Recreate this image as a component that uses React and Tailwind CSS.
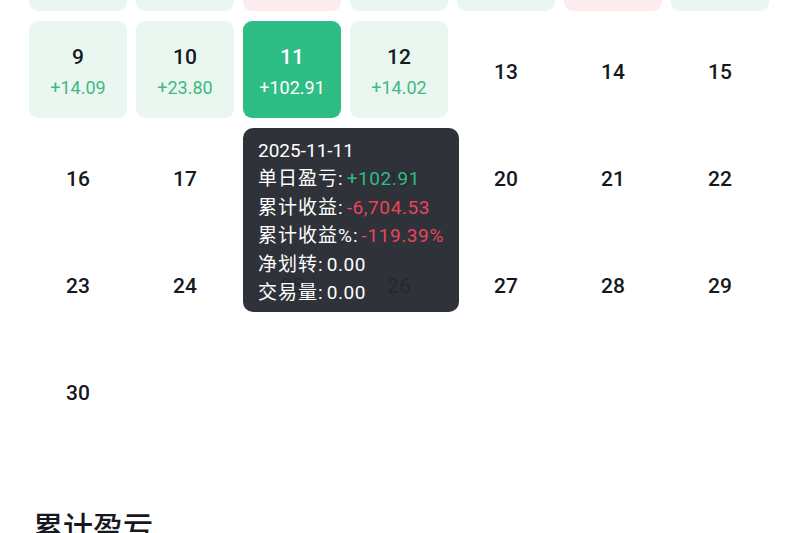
import React from 'react';

const FONT = { fontFamily: 'Roboto, "Noto Sans CJK SC", sans-serif' };

// 2025-11 daily pnl; weeks start on Sunday
const weeks = [
  [
    { d: 2, v: '+8.12' }, { d: 3, v: '+5.40' }, { d: 4, v: '-12.33' }, { d: 5, v: '+3.91' },
    { d: 6, v: '+20.17' }, { d: 7, v: '-7.85' }, { d: 8, v: '+1.02' },
  ],
  [
    { d: 9, v: '+14.09' }, { d: 10, v: '+23.80' }, { d: 11, v: '+102.91', active: true }, { d: 12, v: '+14.02' },
    { d: 13 }, { d: 14 }, { d: 15 },
  ],
  [{ d: 16 }, { d: 17 }, { d: 18 }, { d: 19 }, { d: 20 }, { d: 21 }, { d: 22 }],
  [{ d: 23 }, { d: 24 }, { d: 25 }, { d: 26 }, { d: 27 }, { d: 28 }, { d: 29 }],
  [{ d: 30 }, null, null, null, null, null, null],
];

const tips = [
  { k: '单日盈亏', v: '+102.91', c: 'text-[#2ebd85]' },
  { k: '累计收益', v: '-6,704.53', c: 'text-[#e8455b]' },
  { k: '累计收益%', v: '-119.39%', c: 'text-[#e8455b]' },
  { k: '净划转', v: '0.00', c: 'text-white' },
  { k: '交易量', v: '0.00', c: 'text-white' },
];

const Tooltip = () => (
  <div className="absolute left-0 top-[107px] z-10 w-[216px] h-[184px] rounded-[10px] bg-[#262a31]/[0.96] px-[15px] pt-[9px] text-[19px] leading-[28.4px] text-white whitespace-nowrap">
    <div>2025-11-11</div>
    {tips.map(t => (
      <div key={t.k}>
        <span className="tracking-[1px]">{t.k}:</span>
        <span className={`ml-[3px] tracking-[0.6px] ${t.c}`}>{t.v}</span>
      </div>
    ))}
  </div>
);

const Cell = ({ c }) => {
  if (!c) return <div className="h-[97px]" />;
  const up = c.v && c.v.startsWith('+');
  if (c.active) {
    return (
      <div className="relative">
        <div className="h-[97px] rounded-[9px] bg-[#2ebd85] flex flex-col items-center justify-center pt-[4px] text-white">
          <span className="text-[21px] leading-[26px] font-medium">{c.d}</span>
          <span className="text-[18px] leading-[24px] mt-[6px]">{c.v}</span>
        </div>
        <Tooltip />
      </div>
    );
  }
  if (c.v) {
    return (
      <div className={`h-[97px] rounded-[9px] flex flex-col items-center justify-center pt-[4px] ${up ? 'bg-[#e9f7f0]' : 'bg-[#fdecee]'}`}>
        <span className="text-[21px] leading-[26px] font-medium text-[#15191e]">{c.d}</span>
        <span className={`text-[18px] leading-[24px] mt-[6px] ${up ? 'text-[#42b883]' : 'text-[#e8455b]'}`}>{c.v}</span>
      </div>
    );
  }
  return (
    <div className="h-[97px] flex items-center justify-center pt-[4px]">
      <span className="text-[21px] leading-[26px] font-medium text-[#15191e]">{c.d}</span>
    </div>
  );
};

export default function App() {
  return (
    <div className="w-[800px] h-[533px] overflow-hidden bg-white" style={FONT}>
      <div className="mt-[-86px] pl-[29px] pr-[31px]">
        <div className="flex flex-col gap-[10px]">
          {weeks.map((w, i) => (
            <div key={i} className="grid grid-cols-7 gap-x-[9px]">
              {w.map((c, j) => <Cell key={j} c={c} />)}
            </div>
          ))}
        </div>
      </div>
      <h2 className="mt-[70px] pl-[33px] text-[30px] leading-[38px] font-medium text-[#15191e]">累计盈亏</h2>
    </div>
  );
}
